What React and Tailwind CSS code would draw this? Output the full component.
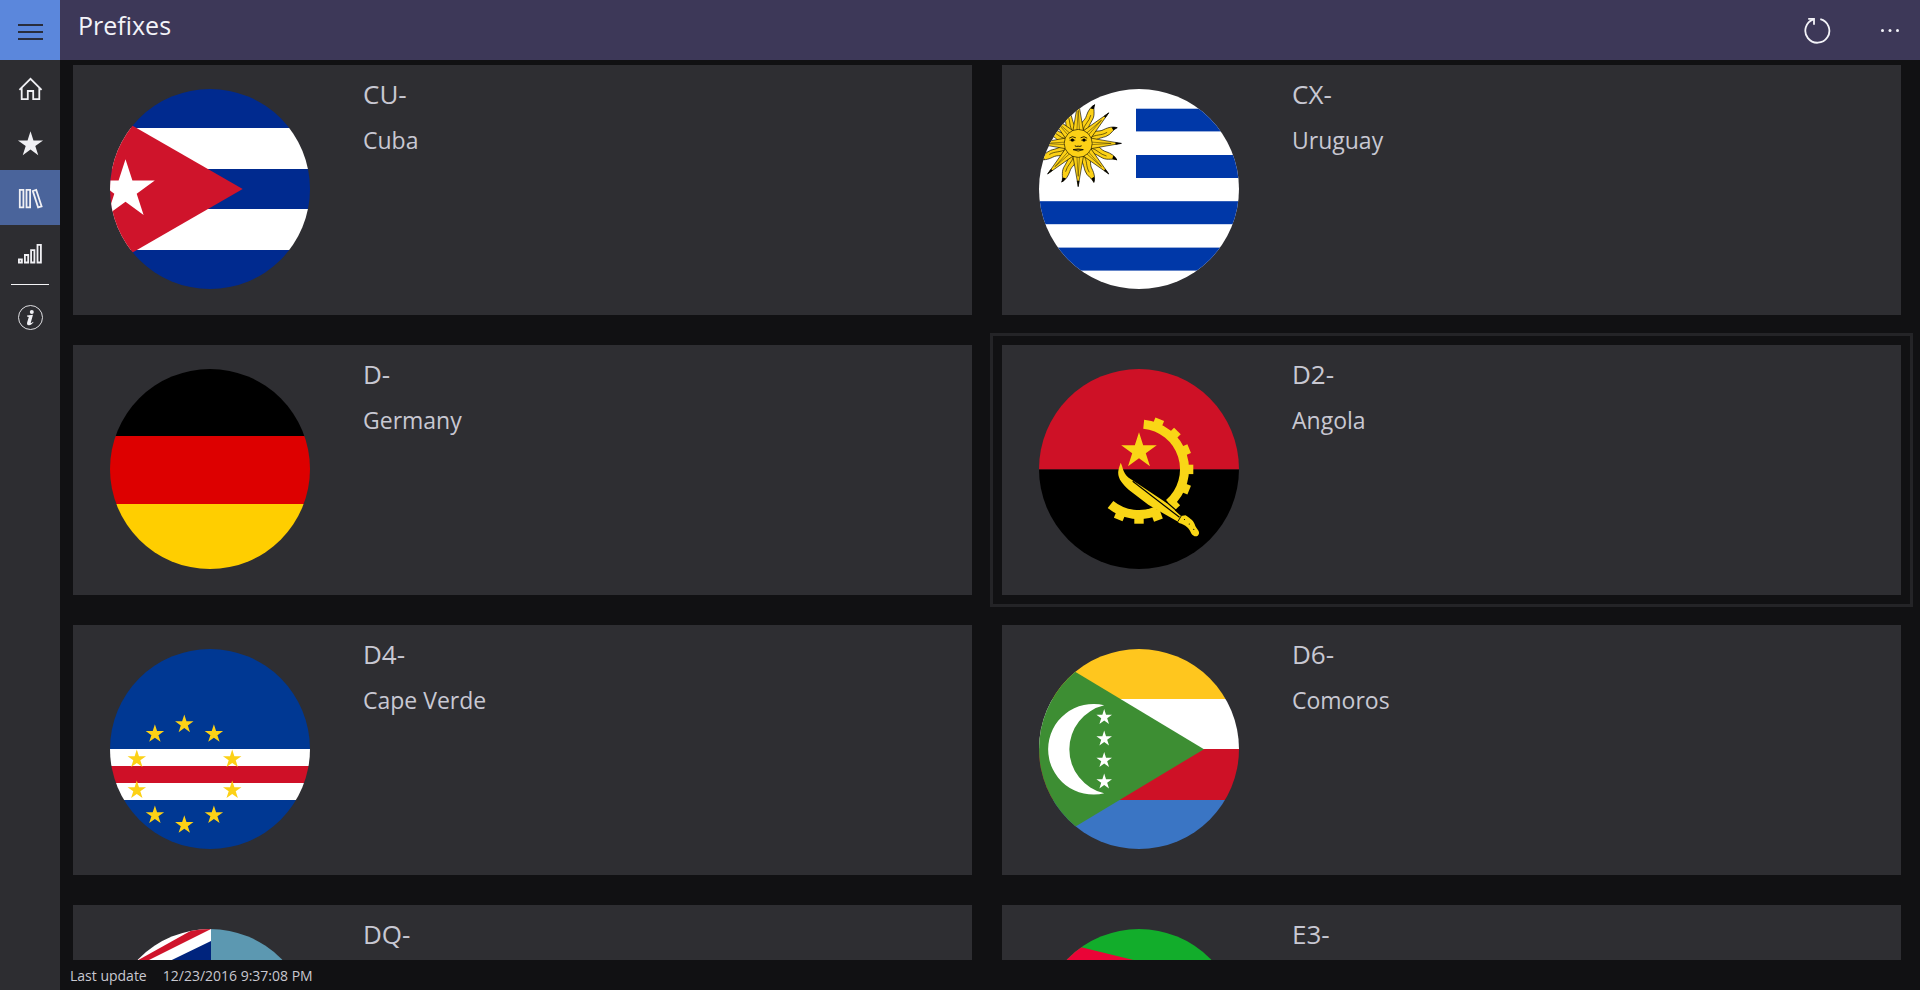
import React from "react";

function starPoints(cx, cy, r) {
  const points = [];
  for (let i = 0; i < 10; i++) {
    const radius = i % 2 === 0 ? r : r * 0.382;
    const angle = ((-90 + i * 36) * Math.PI) / 180;
    points.push(
      `${(cx + radius * Math.cos(angle)).toFixed(2)},${(cy + radius * Math.sin(angle)).toFixed(2)}`
    );
  }
  return points.join(" ");
}

function Star({ cx, cy, r, fill }) {
  return <polygon points={starPoints(cx, cy, r)} fill={fill} />;
}

function Flag({ name, children }) {
  const clip = `flag-${name}`;
  return (
    <svg viewBox="0 0 200 200" className="size-[200px] shrink-0" aria-hidden="true">
      <defs>
        <clipPath id={clip}>
          <circle cx="100" cy="100" r="100" />
        </clipPath>
      </defs>
      <g clipPath={`url(#${clip})`}>{children}</g>
    </svg>
  );
}

function CubaFlag() {
  return (
    <Flag name="cuba">
      <rect width="200" height="39" fill="#002a8f" />
      <rect y="39" width="200" height="41" fill="#fff" />
      <rect y="80" width="200" height="40" fill="#002a8f" />
      <rect y="120" width="200" height="41" fill="#fff" />
      <rect y="161" width="200" height="39" fill="#002a8f" />
      <path d="M0 23.7 132.7 100 0 176.5Z" fill="#cf142b" />
      <Star cx={15.5} cy={101} r={30.8} fill="#fff" />
    </Flag>
  );
}

const EIGHT = [0, 45, 90, 135, 180, 225, 270, 315];

function UruguayFlag() {
  return (
    <Flag name="uruguay">
      <rect width="200" height="200" fill="#fff" />
      <g fill="#0038a8">
        <rect x="97" y="19.7" width="103" height="22.7" />
        <rect x="97" y="66" width="103" height="23" />
        <rect y="112.2" width="200" height="23" />
        <rect y="158.6" width="200" height="23" />
      </g>
      <g transform="translate(39.2 54.4)" stroke="#000" strokeWidth="0.6" strokeLinejoin="round">
        {EIGHT.map((a) => (
          <g key={a} transform={`rotate(${a + 22.5})`}>
            <path
              d="M-4.8 -12C-7 -20 -2.2 -23 -3 -29C-3.4 -34 -2.4 -39 .5 -42C0 -38 4.6 -34 4.2 -28C3.6 -22 2.6 -20 4.8 -12Z"
              fill="#fcd116"
            />
            <path d="M-.5 -13C-2 -20 2 -24 .8 -31" fill="none" strokeWidth="0.5" />
            <path d="M-2 -37C-1.6 -40 -.6 -41 .5 -42.5L1.3 -37.5Z" fill="#000" stroke="none" />
          </g>
        ))}
        {EIGHT.map((a) => (
          <g key={a} transform={`rotate(${a})`}>
            <path d="M-5.4 -12 0 -43 5.4 -12Z" fill="#fcd116" />
            <path d="M-1.3 -13 0 -33 1.3 -13" fill="none" strokeWidth="0.4" />
            <path d="M-1 -37.5 0 -43.4 1 -37.5Z" fill="#000" strokeWidth="0.4" />
          </g>
        ))}
        <circle r="14" fill="#fcd116" />
        <path d="M-9 -5.2Q-6 -8 -2.4 -5.6M9 -5.2Q6 -8 2.4 -5.6" fill="none" strokeWidth="0.8" />
        <path
          d="M-8.6 -3.2Q-5.8 -5.4 -3 -3.2Q-5.8 -1.6 -8.6 -3.2ZM8.6 -3.2Q5.8 -5.4 3 -3.2Q5.8 -1.6 8.6 -3.2Z"
          fill="#fcd116"
          strokeWidth="0.4"
        />
        <circle cx="-5.8" cy="-3.4" r="1.6" stroke="none" />
        <circle cx="5.8" cy="-3.4" r="1.6" stroke="none" />
        <path d="M-3.4 2.4Q-1.6 3.4 0 2.8Q1.6 3.4 3.4 2.4" fill="none" strokeWidth="0.9" />
        <path d="M-5 6.2Q0 4.8 5 6.2Q0 9.2 -5 6.2M-5.2 6.3H5.2" fill="none" strokeWidth="0.7" />
      </g>
    </Flag>
  );
}

function GermanyFlag() {
  return (
    <Flag name="germany">
      <rect width="200" height="67" fill="#000" />
      <rect y="67" width="200" height="68" fill="#d00" />
      <rect y="135" width="200" height="65" fill="#ffce00" />
    </Flag>
  );
}

const GEAR_TEETH = [-67.5, -45, -22.5, 0, 22.5, 46, 69, 90, 112.5];

function AngolaFlag() {
  return (
    <Flag name="angola">
      <rect width="200" height="100.5" fill="#ce1126" />
      <rect y="100.5" width="200" height="99.5" fill="#000" />
      <g fill="#f9d616">
        <Star cx={100} cy={82} r={18.7} fill="#f9d616" />
        <path
          d="M104.7 55.2A45.3 45.3 0 0 1 130 134.4M118.4 141.7A45.3 45.3 0 0 1 71.5 135.5"
          fill="none"
          stroke="#f9d616"
          strokeWidth="9"
        />
        {GEAR_TEETH.map((a) => (
          <rect key={a} x="44" y="-4.7" width="10.3" height="9.4" transform={`translate(100 100.4) rotate(${a})`} />
        ))}
        <path
          d="M81.7 93.7C84 98 83.5 103 89.3 108.5L127.7 134 142 147 146.5 146.3C152 150 155 152 156.3 157C157.5 160 160.5 161.5 160 164.5C159 168.5 154.5 168 152.3 164.5C150 159 147 156 140 154L138.6 152.6 109.3 135.8 90 121C82 114 78 108 79.5 101C80 98 81 96 81.7 93.7Z"
        />
        <path d="M125.5 131.3 142 145.6" stroke="#000" strokeWidth="1.2" fill="none" />
        <path d="M93.7 112.3 140.5 148.3" stroke="#000" strokeWidth="1.2" fill="none" />
        <path d="M142.2 147 138.8 152.6" stroke="#000" strokeWidth="0.9" fill="none" />
        <circle cx="145.5" cy="150.5" r="0.6" fill="#000" />
        <circle cx="150.3" cy="155" r="0.6" fill="#000" />
        <circle cx="154.8" cy="160.3" r="0.6" fill="#000" />
      </g>
    </Flag>
  );
}

const CAPE_VERDE_STARS = [
  [74.3, 75.3], [44.9, 85], [103.9, 85], [26.8, 110.2], [122.2, 110.2],
  [26.8, 141.2], [122.2, 141.2], [44.9, 166.2], [103.9, 166.2], [74.3, 176],
];

function CapeVerdeFlag() {
  return (
    <Flag name="cape-verde">
      <rect width="200" height="100" fill="#003893" />
      <rect y="100" width="200" height="17" fill="#fff" />
      <rect y="117" width="200" height="17" fill="#cf1027" />
      <rect y="134" width="200" height="17" fill="#fff" />
      <rect y="151" width="200" height="49" fill="#003893" />
      {CAPE_VERDE_STARS.map(([x, y]) => (
        <Star key={`${x}-${y}`} cx={x} cy={y} r={9.7} fill="#fcd116" />
      ))}
    </Flag>
  );
}

function ComorosFlag() {
  return (
    <Flag name="comoros">
      <rect width="200" height="50" fill="#ffc61e" />
      <rect y="50" width="200" height="50" fill="#fff" />
      <rect y="100" width="200" height="51" fill="#ce1126" />
      <rect y="151" width="200" height="49" fill="#3a75c4" />
      <path d="M0 1 165 100.2 0 199.4Z" fill="#3d8e33" />
      <path d="M65.2 56.3A45.3 45.3 0 1 0 65.2 144.3A45.2 45.2 0 0 1 65.2 56.3Z" fill="#fff" />
      {[68.3, 89.8, 111.3, 132.8].map((y) => (
        <Star key={y} cx={65.2} cy={y} r={8.2} fill="#fff" />
      ))}
    </Flag>
  );
}

function FijiFlag() {
  return (
    <Flag name="fiji">
      <rect x="101" width="99" height="200" fill="#5c98b1" />
      <rect y="100" width="101" height="100" fill="#5c98b1" />
      <rect width="101" height="100" fill="#fff" />
      <path d="M101 12V100H0V61Z" fill="#00247d" />
      <path d="M101 0 39 31 0 50.5V46.8L84 0Z" fill="#cf142b" />
    </Flag>
  );
}

function EritreaFlag() {
  return (
    <Flag name="eritrea">
      <rect width="200" height="100" fill="#12ad2b" />
      <rect y="100" width="200" height="100" fill="#4189dd" />
      <path d="M0 7.8 200 57V143L0 192Z" fill="#ea0437" />
    </Flag>
  );
}

const PREFIXES = [
  { code: "CU-", country: "Cuba", Picture: CubaFlag },
  { code: "CX-", country: "Uruguay", Picture: UruguayFlag },
  { code: "D-", country: "Germany", Picture: GermanyFlag },
  { code: "D2-", country: "Angola", Picture: AngolaFlag, focused: true },
  { code: "D4-", country: "Cape Verde", Picture: CapeVerdeFlag },
  { code: "D6-", country: "Comoros", Picture: ComorosFlag },
  { code: "DQ-", Picture: FijiFlag },
  { code: "E3-", Picture: EritreaFlag },
];

function Icon({ children }) {
  return (
    <svg viewBox="0 0 28 28" className="size-7" fill="none" stroke="currentColor" strokeWidth="1.8" aria-hidden="true">
      {children}
    </svg>
  );
}

function MenuIcon() {
  return (
    <Icon>
      <path d="M2 7h25M2 14h25M2 21h25" strokeWidth="2" />
    </Icon>
  );
}

function HomeIcon() {
  return (
    <Icon>
      <path d="M3.4 15.8 14.5 4.8 25.6 15.8M5.7 14V25.2H11.8V17H17.2V25.2H23.3V14" />
    </Icon>
  );
}

function FavoriteIcon() {
  return (
    <Icon>
      <polygon points={starPoints(14.5, 15.5, 13.2)} fill="currentColor" stroke="none" />
    </Icon>
  );
}

function LibraryIcon() {
  return (
    <Icon>
      <path d="M3.8 5.8H7.4V23.4H3.8ZM10.5 5.8H14.1V23.4H10.5ZM16.8 7 20.2 5.9 25.6 22.3 22.1 23.4Z" />
    </Icon>
  );
}

function SignalIcon() {
  return (
    <Icon>
      <path d="M2.9 20.5H5.9V23.5H2.9ZM8.9 16H12.2V23.5H8.9ZM15.1 11.1H18.4V23.5H15.1ZM21.5 5.9H24.9V23.5H21.5Z" />
    </Icon>
  );
}

function InfoIcon() {
  return (
    <Icon>
      <circle cx="14.5" cy="14.5" r="12" strokeWidth="0.9" />
      <circle cx="15.8" cy="8.9" r="2" fill="currentColor" stroke="none" />
      <path
        d="M11.1 12.6 17 11.8 14.8 19.6C14.6 20.4 15.2 20.4 17 18.7L17.5 19.3C15.7 21.7 14.2 22.4 12.7 22.2C11 22 10.8 20.7 11.2 19.2L12.8 13.9 11 13.6Z"
        fill="currentColor"
        stroke="none"
      />
    </Icon>
  );
}

function RefreshIcon() {
  return (
    <Icon>
      <path d="M17.3 3.1A12 12 0 1 1 10.4 3.4" />
      <path d="M5.2 2.8H11V8.8" />
    </Icon>
  );
}

function MoreIcon() {
  return (
    <Icon>
      <g fill="currentColor" stroke="none">
        <circle cx="6.5" cy="14.5" r="1.5" />
        <circle cx="14" cy="14.5" r="1.5" />
        <circle cx="21.5" cy="14.5" r="1.5" />
      </g>
    </Icon>
  );
}

function NavButton({ label, selected, children }) {
  return (
    <button
      type="button"
      aria-label={label}
      aria-current={selected ? "page" : undefined}
      className={`flex h-[55px] w-full items-center justify-center text-[#f0f0f4] ${
        selected ? "bg-[#4a649b]" : ""
      }`}
    >
      {children}
    </button>
  );
}

function PrefixCard({ code, country, Picture, focused }) {
  return (
    <li>
      <a
        href={`#${code}`}
        className={`flex h-[250px] gap-[53px] bg-[#2e2e32] pt-6 pl-[37px] ${
          focused ? "outline-3 outline-offset-9 outline-[#242427]" : ""
        }`}
      >
        <Picture />
        <div className="-mt-3 min-w-0 text-[#c8c8d2]">
          <h2 className="text-[26px] leading-[34px]">{code}</h2>
          {country && <p className="mt-3 text-[23px] leading-[34px]">{country}</p>}
        </div>
      </a>
    </li>
  );
}

export default function App() {
  return (
    <div className="flex h-screen overflow-hidden bg-[#111113] font-['Open_Sans','Noto_Sans',sans-serif]">
      <nav className="flex w-[60px] shrink-0 flex-col bg-[#2d2d31]" aria-label="Main">
        <button
          type="button"
          aria-label="Menu"
          className="flex h-[60px] w-full items-center justify-center bg-[#5b87dc] pt-1 text-[#292d3c]"
        >
          <MenuIcon />
        </button>
        <NavButton label="Home"><HomeIcon /></NavButton>
        <NavButton label="Favorites"><FavoriteIcon /></NavButton>
        <NavButton label="Prefixes" selected><LibraryIcon /></NavButton>
        <NavButton label="Signal"><SignalIcon /></NavButton>
        <hr className="mx-[11px] my-1 border-t border-[#f4f4f6]" />
        <NavButton label="About"><InfoIcon /></NavButton>
      </nav>

      <div className="flex min-w-0 flex-1 flex-col">
        <header className="flex h-[60px] shrink-0 justify-between bg-[#3d3858] pl-[18px] text-[#f3f3f8]">
          <h1 className="mt-2 text-[25px] leading-[34px]">Prefixes</h1>
          <div className="flex items-center gap-[45px] pr-4">
            <button type="button" aria-label="Refresh"><RefreshIcon /></button>
            <button type="button" aria-label="More"><MoreIcon /></button>
          </div>
        </header>

        <main className="min-h-0 flex-1 overflow-y-auto pt-[5px] pr-[19px] pl-[13px] [scrollbar-width:none]">
          <ul className="grid grid-cols-2 gap-[30px]">
            {PREFIXES.map((item) => (
              <PrefixCard key={item.code} {...item} />
            ))}
          </ul>
        </main>

        <footer className="flex h-[30px] shrink-0 items-center gap-4 pl-[10px] text-[14px] text-[#c8c8d0]">
          <span>Last update</span>
          <span>12/23/2016 9:37:08 PM</span>
        </footer>
      </div>
    </div>
  );
}
